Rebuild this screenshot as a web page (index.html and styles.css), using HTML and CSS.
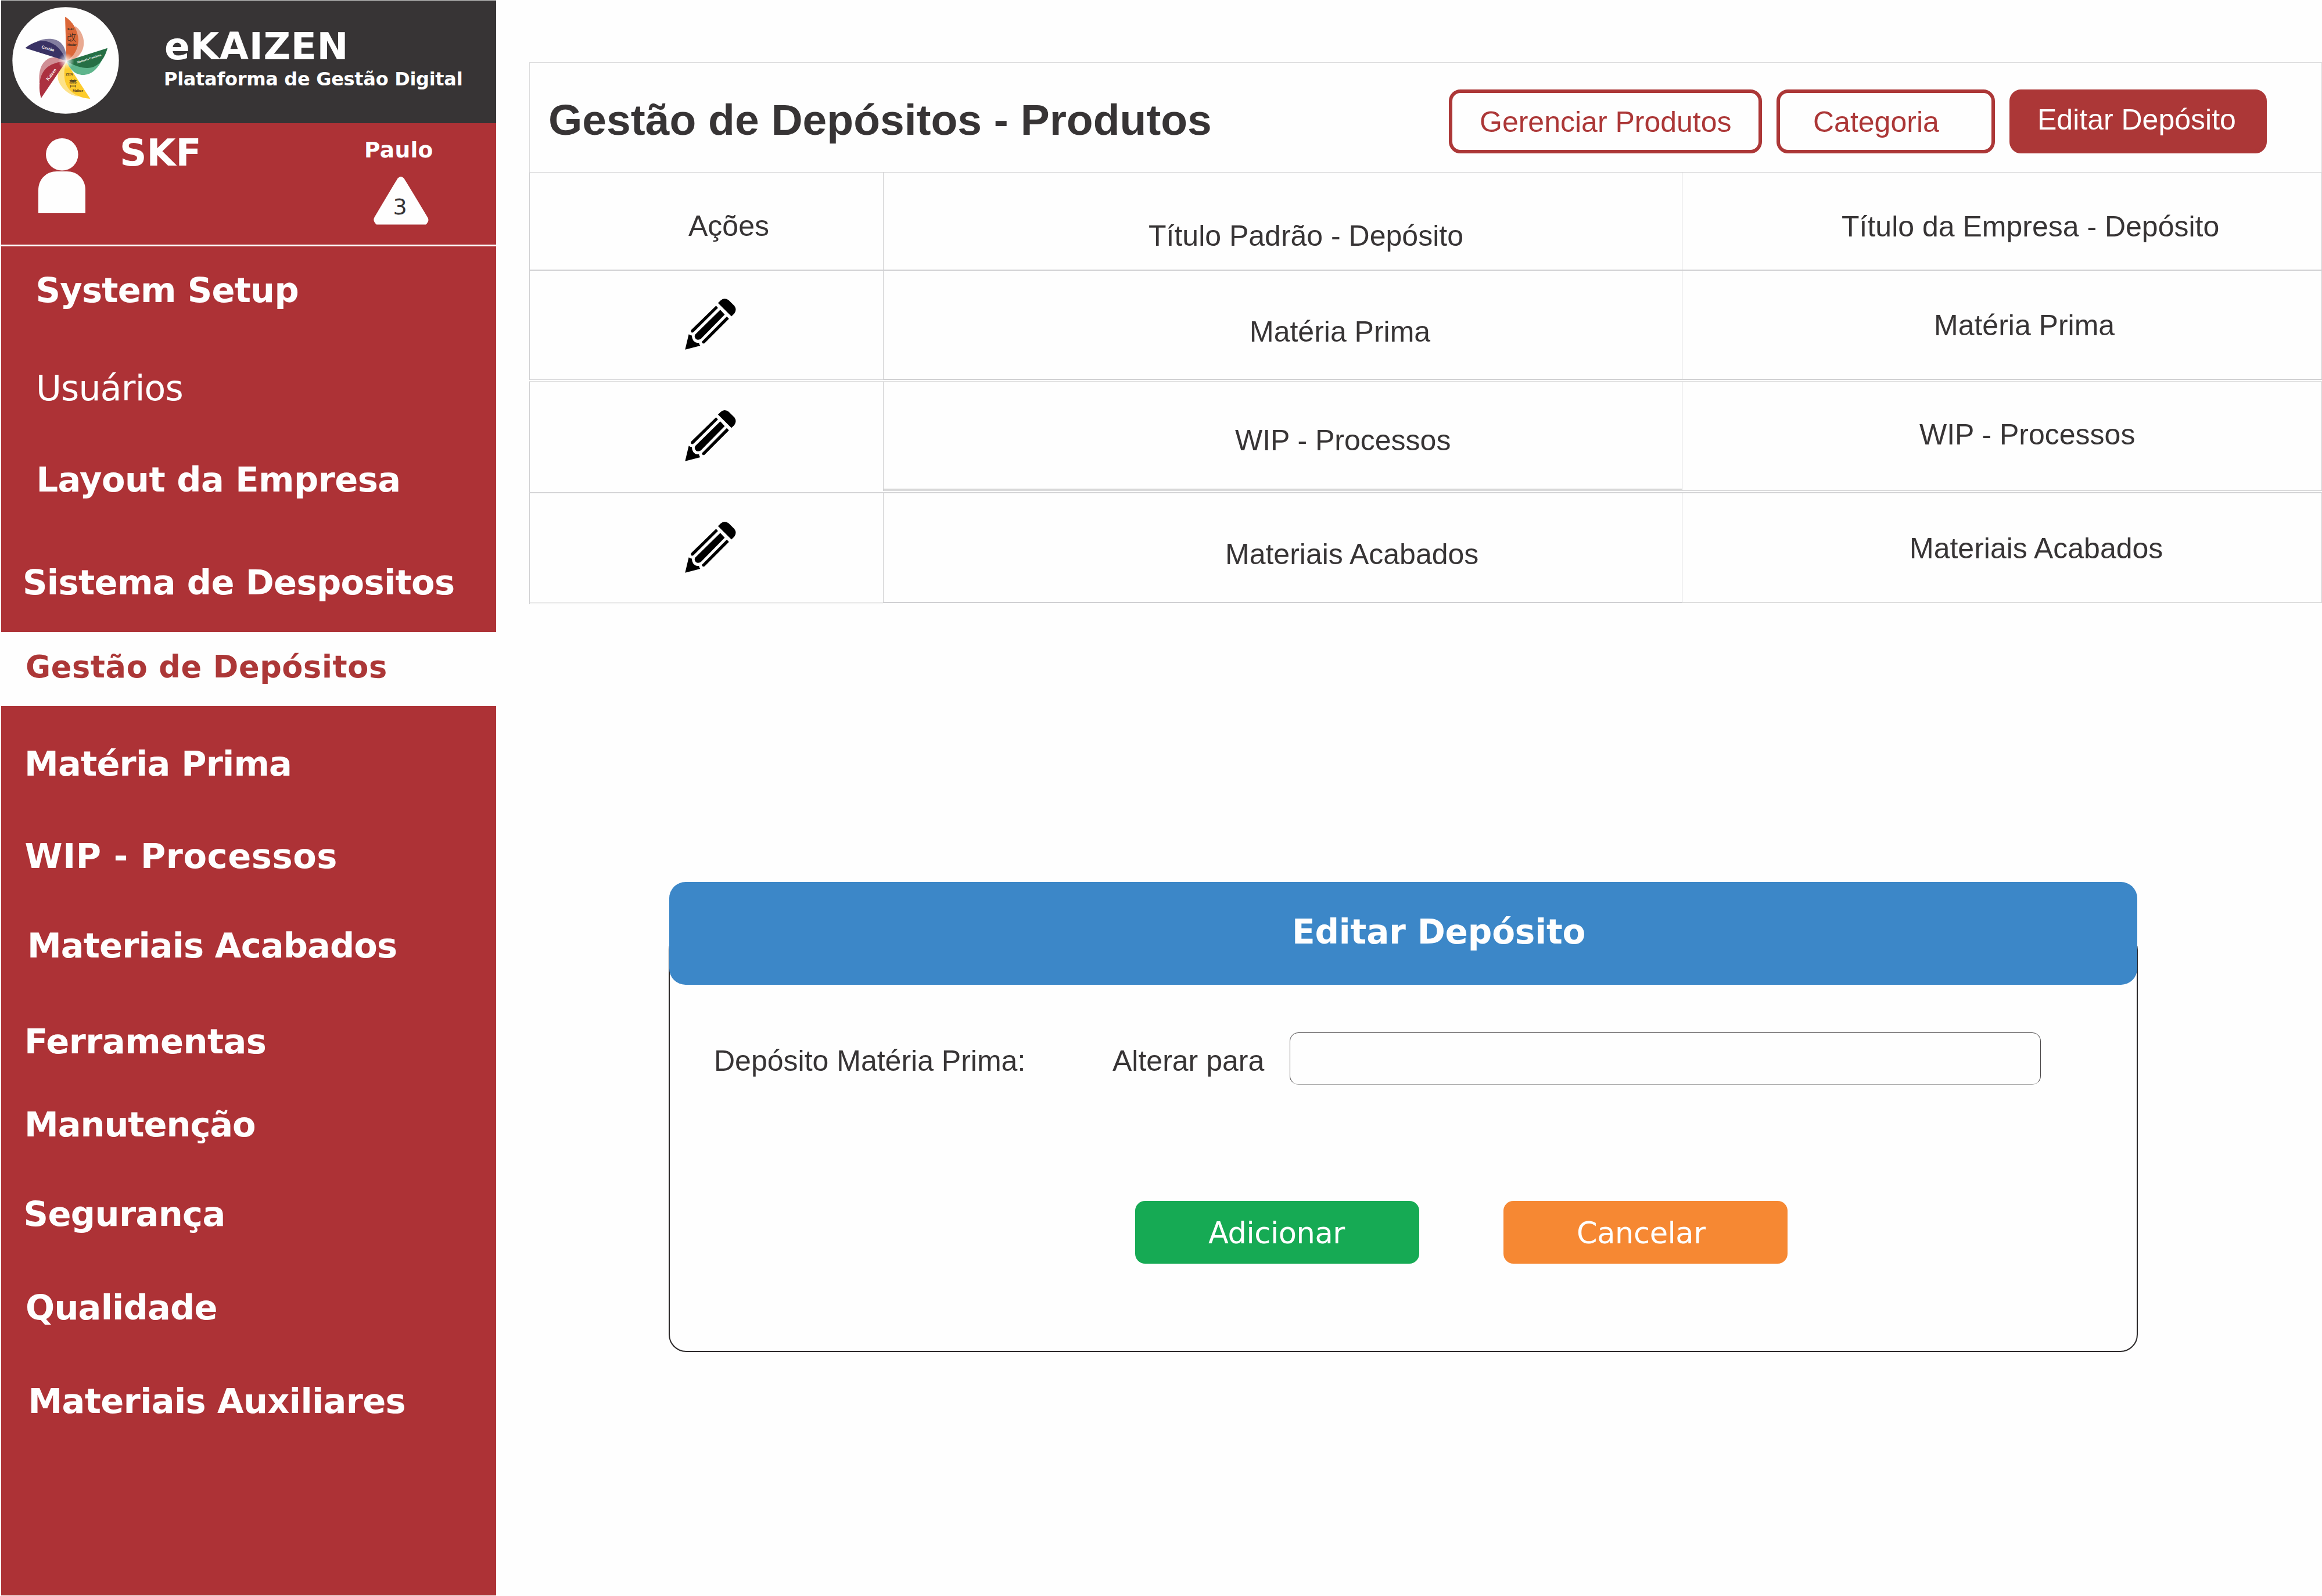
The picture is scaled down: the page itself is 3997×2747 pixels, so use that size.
FILE: index.html
```html
<!DOCTYPE html>
<html lang="pt-BR">
<head>
<meta charset="utf-8">
<title>eKAIZEN - Gestão de Depósitos</title>
<link rel="stylesheet" href="styles.css">
</head>
<body>
<svg class="defs" width="0" height="0" aria-hidden="true">
  <symbol id="pencil" viewBox="118 101 264 266">
    <path d="M118 366L137 286Q146 293 153 293Q154 325 180 331L190 331Q192 342 197 346Z"/>
    <path d="M301 159L324 184L200 310Q185 318 175 312Q163 300 171 287Z"/>
    <path d="M279 138L289 149L163 274Q154 281 149 275Q145 268 151 263Z"/>
    <path d="M335 194L346 206L220 332Q212 338 207 331Q203 324 210 320Z"/>
    <path d="M289 124L303 110Q323 93 345 109L374 138Q389 158 374 179L359 193Z"/>
  </symbol>
</svg>

<aside class="sidebar">
  <header class="brand">
    <svg class="logo" viewBox="62 36 552 552">
      <defs>
        <radialGradient id="glow">
          <stop offset="0" stop-color="#fff" stop-opacity=".95"/>
          <stop offset="1" stop-color="#fff" stop-opacity="0"/>
        </radialGradient>
      </defs>
      <circle cx="338" cy="312" r="275" fill="#fefefe"/>
      <path fill="#E9AA92" d="M388 135C430 165 440 220 426 255C412 290 385 310 342 317L360 200Z"/>
      <path fill="#DB6738" d="M335 86C375 110 400 155 404 205C403 250 385 290 342 315Z"/>
      <path fill="#5FB58C" d="M530 300C505 360 465 390 420 387C385 383 360 360 342 316Z"/>
      <path fill="#266F45" d="M554 248L342 316C390 345 435 356 470 349C520 335 543 290 554 248Z"/>
      <path fill="#FDE28A" d="M341 320C305 350 288 385 302 420C318 460 360 495 405 498Z"/>
      <path fill="#FDCB2C" d="M341 320L465 510C400 505 350 475 335 420C328 385 330 350 341 320Z"/>
      <path fill="#D08F96" d="M202 430C197 370 210 325 245 305C275 290 310 290 340 317Z"/>
      <path fill="#AC3140" d="M340 317L211 507C198 460 200 410 220 375C245 330 300 318 340 317Z"/>
      <path fill="#837E9F" d="M188 215C230 195 280 195 310 218C335 240 342 270 341 314Z"/>
      <path fill="#393264" d="M129 248L340 314C325 270 300 235 255 218C215 202 170 215 129 248Z"/>
      <circle cx="341" cy="316" r="42" fill="url(#glow)"/>
      <g class="logo-dark">
        <text x="347" y="156" font-size="17">KAI</text>
        <text class="kanji" x="345" y="210" font-size="48">改</text>
        <text x="346" y="238" font-size="16">Mudar</text>
        <text x="338" y="389" font-size="18">ZEN</text>
        <text class="kanji" x="353" y="448" font-size="46">善</text>
        <text x="374" y="473" font-size="17">Melhor</text>
      </g>
      <g class="logo-light">
        <text transform="translate(212 248) rotate(16)" font-size="23">Gestão</text>
        <text transform="translate(248 418) rotate(-53)" font-size="24">Kaizen</text>
        <text transform="translate(398 328) rotate(-18)" font-size="16">Melhoria Contínua</text>
      </g>
    </svg>
    <div class="brand-text">
      <div class="brand-name">eKAIZEN</div>
      <div class="brand-tagline">Plataforma de Gestão Digital</div>
    </div>
  </header>

  <section class="profile">
    <svg class="avatar" viewBox="66 238 81 129">
      <circle cx="106.8" cy="265.8" r="27.8"/>
      <path d="M66 367V327C66 308 80 295 98 295H115C133 295 147 308 147 327V367Z"/>
    </svg>
    <div class="company">SKF</div>
    <div class="user">
      <div class="user-name">Paulo</div>
      <svg class="alert" viewBox="643 305 95 83">
        <path d="M685 307.500Q690 302.500 695 307.500Q697 310 736 375Q740 381 733 387.500H648Q641 381 644.500 375Q683 310 685 307.500Z"/>
        <text x="676.500" y="369.500">3</text>
      </svg>
    </div>
  </section>

  <nav class="nav">
    <a class="nav-item setup">System Setup</a>
    <a class="nav-item users">Usuários</a>
    <a class="nav-item layout">Layout da Empresa</a>
    <a class="nav-item system">Sistema de Despositos</a>
    <a class="nav-item active">Gestão de Depósitos</a>
    <a class="nav-item raw">Matéria Prima</a>
    <a class="nav-item wip">WIP - Processos</a>
    <a class="nav-item finished">Materiais Acabados</a>
    <a class="nav-item tools">Ferramentas</a>
    <a class="nav-item maintenance">Manutenção</a>
    <a class="nav-item safety">Segurança</a>
    <a class="nav-item quality">Qualidade</a>
    <a class="nav-item auxiliary">Materiais Auxiliares</a>
  </nav>
</aside>

<main class="main">
  <section class="panel">
    <header class="panel-head">
      <h1 class="title">Gestão de Depósitos - Produtos</h1>
      <div class="actions">
        <button class="btn products">Gerenciar Produtos</button>
        <button class="btn category">Categoria</button>
        <button class="btn primary">Editar Depósito</button>
      </div>
    </header>
    <div class="row row-head">
      <div class="cell">Ações</div>
      <div class="cell">Título Padrão - Depósito</div>
      <div class="cell">Título da Empresa - Depósito</div>
    </div>
    <div class="row row-raw">
      <div class="cell"><svg class="pencil"><use href="#pencil"/></svg></div>
      <div class="cell">Matéria Prima</div>
      <div class="cell">Matéria Prima</div>
    </div>
    <div class="row row-wip">
      <div class="cell"><svg class="pencil"><use href="#pencil"/></svg></div>
      <div class="cell"><div class="inner">WIP - Processos</div></div>
      <div class="cell">WIP - Processos</div>
    </div>
    <div class="row row-finished">
      <div class="cell"><div class="inner"><svg class="pencil"><use href="#pencil"/></svg></div></div>
      <div class="cell">Materiais Acabados</div>
      <div class="cell">Materiais Acabados</div>
    </div>
  </section>

  <section class="modal">
    <header class="modal-head">Editar Depósito</header>
    <div class="modal-body">
      <div class="field">
        <div class="field-name">Depósito Matéria Prima:</div>
        <label class="field-label" for="new-name">Alterar para</label>
        <input class="field-input" id="new-name" type="text">
      </div>
      <div class="modal-actions">
        <button class="modal-btn add">Adicionar</button>
        <button class="modal-btn cancel">Cancelar</button>
      </div>
    </div>
  </section>
</main>
</body>
</html>
```
FILE: styles.css
```css
* { box-sizing: border-box; }

body {
  margin: 0;
  width: 3997px;
  height: 2747px;
  overflow: hidden;
  display: flex;
  align-items: flex-start;
  background: #fefefe;
  color: #373435;
  font-family: "Liberation Sans", Arial, sans-serif;
  font-size: 50px;
  line-height: 60px;
}

.defs { position: absolute; }
svg { display: block; flex: none; }

/* Sidebar */
.sidebar {
  width: 852px;
  height: 2746px;
  margin-left: 2px;
  flex: none;
  border-top: 1px solid #c9caca;
  background: #ad3236;
  color: #fefefe;
  font-family: "DejaVu Sans", Verdana, sans-serif;
  font-weight: bold;
  white-space: nowrap;
}

.brand {
  height: 211px;
  display: flex;
  align-items: flex-start;
  background: #373435;
}
.logo { width: 184px; height: 184px; margin: 11px 0 0 19px; }
.logo-dark { fill: #33271f; }
.logo-light { fill: #fefefe; }
.logo text { font-family: "Liberation Serif", serif; }
.logo .kanji { font-family: "Noto Sans CJK JP", sans-serif; font-weight: 300; }
.brand-text { margin: 44px 0 0 76px; }
.brand-name { font-size: 64.5px; line-height: 70px; letter-spacing: .69px; margin-left: 2px; }
.brand-tagline { font-size: 32px; line-height: 40px; letter-spacing: -.3px; margin-left: 1px; margin-top: 1px; }

.profile {
  height: 212px;
  display: flex;
  align-items: flex-start;
  padding: 16px 0 0 64px;
  border-bottom: 3px solid #fefefe;
}
.avatar { width: 81px; height: 129px; margin-top: 10px; fill: #fefefe; }
.company { width: 419px; margin-left: 59px; font-size: 64.5px; line-height: 70px; letter-spacing: 0; }
.user-name { font-size: 37.5px; line-height: 44px; letter-spacing: .32px; margin: 8px 0 0 2px; }
.alert { width: 95px; height: 83px; margin: 24px 0 0 18px; fill: #fefefe; }
.alert text { fill: #373435; font-size: 38px; font-weight: normal; }

.nav { display: flex; flex-direction: column; }
.nav-item { font-size: 59px; line-height: 60px; }
.setup { margin-top: 46px; padding-left: 59.500px; letter-spacing: -.74px; }
.users { margin-top: 108px; padding-left: 60px; letter-spacing: -.8px; font-size: 60px; font-weight: normal; }
.layout { margin-top: 98px; padding-left: 60.500px; letter-spacing: -.52px; }
.system { margin-top: 117px; padding-left: 37px; letter-spacing: -.63px; }
.active {
  height: 127px;
  margin: 55px 0 0;
  padding-left: 42px;
  background: #fefefe;
  color: #ac3737;
  font-size: 52.5px;
  line-height: 120px;
  letter-spacing: .64px;
}
.raw { margin-top: 70px; padding-left: 40px; letter-spacing: -.78px; }
.wip { margin-top: 99px; padding-left: 40.500px; letter-spacing: .6px; }
.finished { margin-top: 94px; padding-left: 45px; letter-spacing: -.89px; }
.tools { margin-top: 105px; padding-left: 40px; letter-spacing: -.56px; }
.maintenance { margin-top: 83px; padding-left: 40px; letter-spacing: -1.05px; }
.safety { margin-top: 94px; padding-left: 38.500px; letter-spacing: -.58px; }
.quality { margin-top: 101px; padding-left: 42px; letter-spacing: -.78px; }
.auxiliary { margin-top: 101px; padding-left: 46.500px; letter-spacing: -.63px; }

/* Main column */
.main { width: 3086px; margin-left: 57px; padding-top: 107px; flex: none; white-space: nowrap; }

.panel-head {
  height: 190px;
  display: flex;
  align-items: flex-start;
  justify-content: space-between;
  padding: 46px 94px 0 32px;
  border: 1px solid #dcdcdd;
  border-bottom-color: #d3d3d4;
}
.title { margin: 7px 0 0; font-size: 75px; line-height: 90px; }
.actions { display: flex; gap: 25px; }
.btn {
  height: 110px;
  padding: 0;
  border: 6px solid #ac3737;
  border-radius: 20px;
  background: #fefefe;
  color: #ac3737;
  font: 50px/60px "Liberation Sans", Arial, sans-serif;
  text-align: left;
}
.products { width: 539px; padding: 1px 0 0 47px; }
.category { width: 376px; padding: 1px 0 0 57px; }
.primary { width: 443px; padding: 0 0 7px 42px; background: #ac3737; color: #fefefe; }

.row {
  display: grid;
  grid-template-columns: 609px 1375px 1102px;
  align-items: start;
}
.cell { border: 0 solid #d0d0d2; border-left-width: 1px; }
.cell:last-child { border-right-width: 1px; }
.pencil { width: 88px; height: 88px; margin-left: 267px; fill: #000; }

.row-head .cell { height: 169px; border-bottom-width: 2px; }
.row-head .cell:nth-child(1) { padding: 62px 0 0 273px; }
.row-head .cell:nth-child(2) { padding: 79px 0 0 456px; }
.row-head .cell:nth-child(3) { padding: 63px 0 0 274px; }

.row-raw { margin-bottom: 2px; }
.row-raw .cell { height: 188px; border-bottom-width: 2px; }
.row-raw .cell:nth-child(1) { padding-top: 48px; border-bottom-width: 1px; }
.row-raw .cell:nth-child(2) { padding: 75px 0 0 630px; }
.row-raw .cell:nth-child(3) { padding: 64px 0 0 433px; }

.row-wip { height: 193px; border-top: 1px solid #dedede; border-bottom: 2px solid #d4d4d6; }
.row-wip .cell { height: 188px; border-bottom-width: 1px; }
.row-wip .cell:nth-child(1) { height: 190px; padding-top: 49px; border-bottom: 0; }
.row-wip .inner { height: 186px; padding: 71px 0 0 605px; border-bottom: 2px solid #d8d8d8; }
.row-wip .cell:nth-child(3) { padding: 61px 0 0 408px; }

.row-finished { height: 191px; }
.row-finished .cell { height: 189px; border-bottom-width: 2px; }
.row-finished .cell:nth-child(1) { height: 191px; border-bottom-width: 1px; }
.row-finished .inner { height: 189px; padding-top: 49px; border-bottom: 2px solid #ebebeb; }
.row-finished .cell:nth-child(2) { padding: 75px 0 0 588px; }
.row-finished .cell:nth-child(3) { padding: 65px 0 0 391px; border-bottom-color: #dedede; }

/* Edit dialog */
.modal { width: 2529px; margin: 478px 0 0 240px; }
.modal-head {
  position: relative;
  z-index: 1;
  height: 177px;
  margin: 0 1px;
  padding-left: 1072px;
  border-radius: 28px;
  background: #3c87c8;
  color: #fefefe;
  font: bold 58px/173px "DejaVu Sans", Verdana, sans-serif;
  letter-spacing: -.15px;
}
.modal-body {
  height: 722px;
  margin-top: -90px;
  padding: 170px 0 0 76px;
  border: 2px solid #2b2829;
  border-radius: 30px;
}
.field { display: flex; align-items: flex-start; }
.field-name { width: 686px; padding-top: 19px; }
.field-label { width: 305px; padding-top: 19px; }
.field-input {
  width: 1293px;
  height: 90px;
  border: 1px solid #4a4748;
  border-bottom-color: #aaa;
  border-radius: 15px;
  background: #fefefe;
}
.modal-actions { display: flex; gap: 145px; margin: 200px 0 0 725px; }
.modal-btn {
  width: 489px;
  height: 108px;
  padding: 3px 0 0 126px;
  border: 0;
  border-radius: 17px;
  color: #fefefe;
  font: 51px/60px "DejaVu Sans", Verdana, sans-serif;
  letter-spacing: -.4px;
  text-align: left;
}
.add { background: #16aa54; }
.cancel { background: #f68833; }
```
